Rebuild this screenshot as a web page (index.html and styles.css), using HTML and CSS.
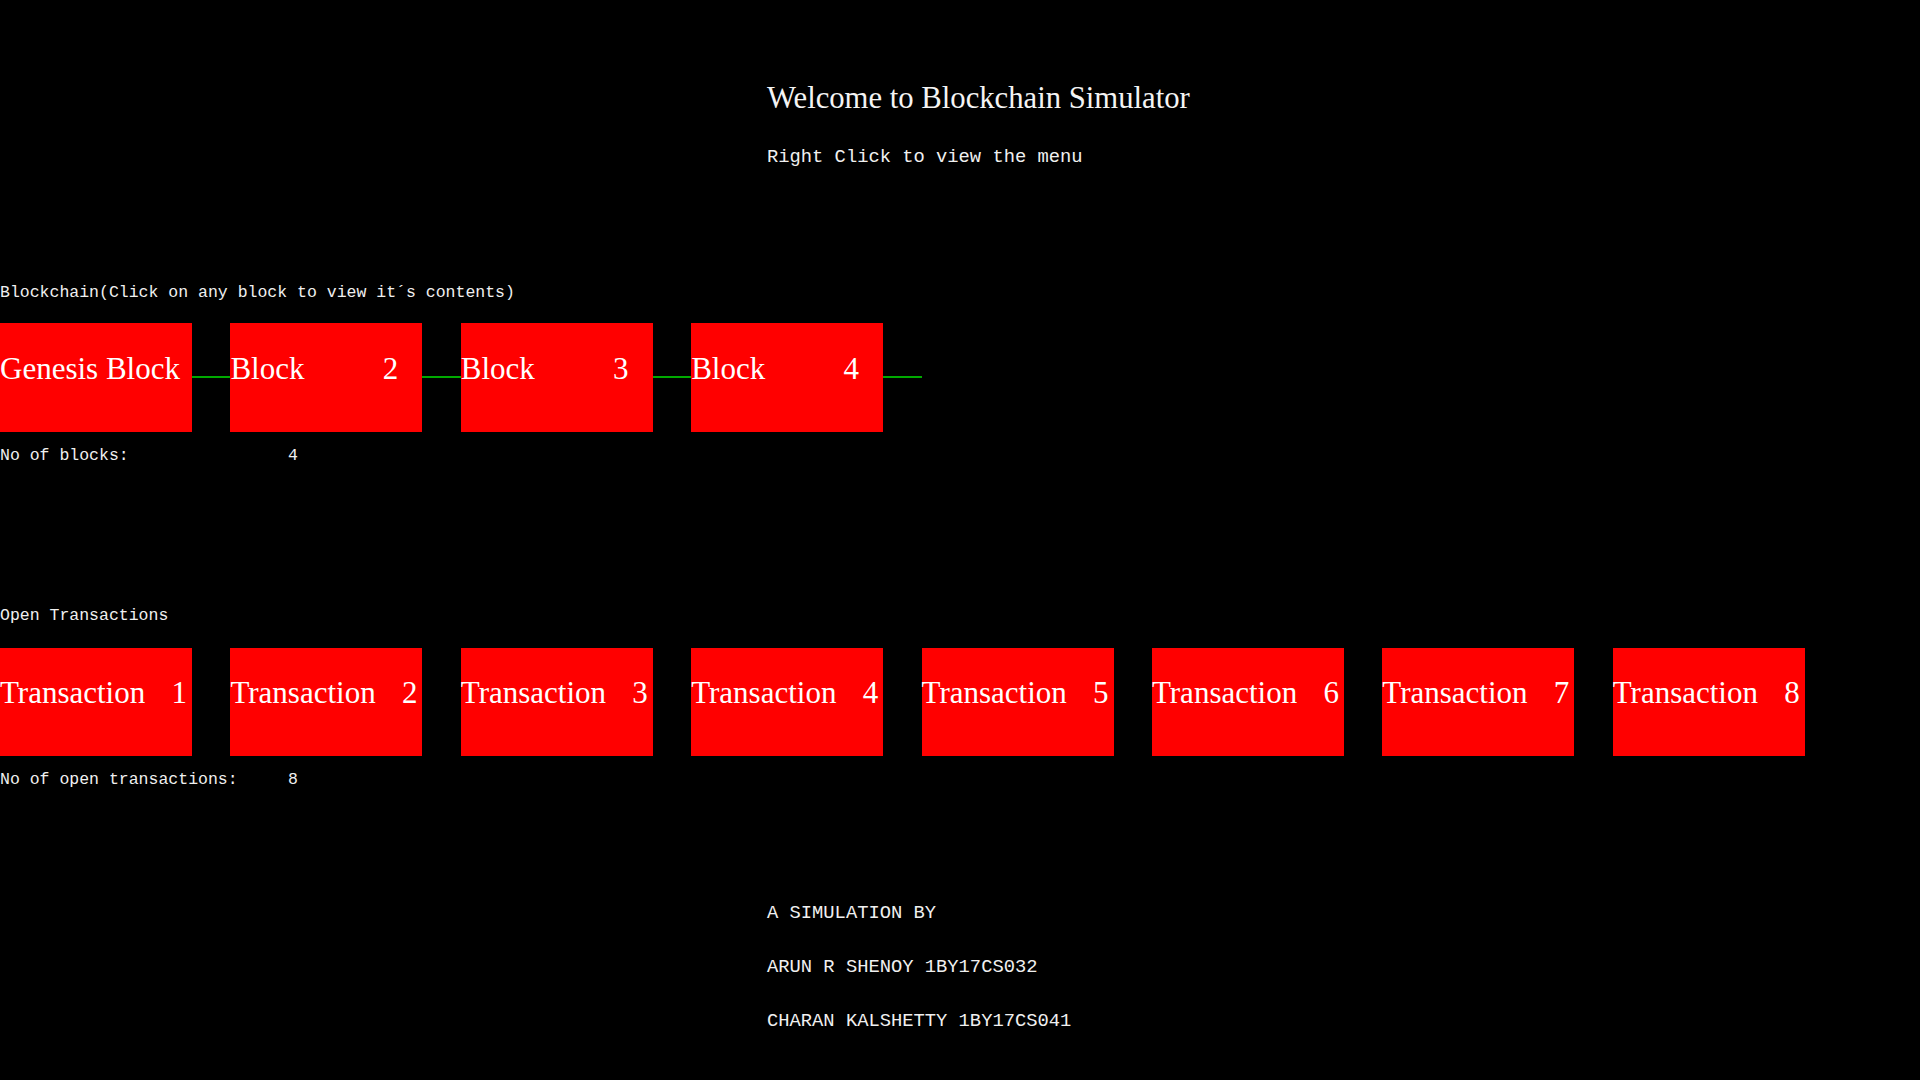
FILE: index.html
```html
<!DOCTYPE html>
<html lang="en">
<head>
<meta charset="utf-8">
<title>Blockchain Simulator</title>
<link rel="stylesheet" href="styles.css">
</head>
<body>
<main class="screen">
  <header class="intro">
    <h1 class="title">Welcome to Blockchain Simulator</h1>
    <p class="mono subtitle">Right Click to view the menu</p>
  </header>

  <section class="section chain-section">
    <p class="mono small section-label">Blockchain(Click on any block to view it´s contents)</p>
    <div class="chain">
      <div class="box"><span class="box-label">Genesis Block</span></div>
      <div class="link"></div>
      <div class="box"><span class="box-label block-name">Block</span><span class="box-num">2</span></div>
      <div class="link"></div>
      <div class="box"><span class="box-label block-name">Block</span><span class="box-num">3</span></div>
      <div class="link"></div>
      <div class="box"><span class="box-label block-name">Block</span><span class="box-num">4</span></div>
      <div class="link"></div>
    </div>
    <p class="mono small count"><span class="count-label">No of blocks:</span>4</p>
  </section>

  <section class="section tx-section">
    <p class="mono small section-label">Open Transactions</p>
    <div class="tx-row">
      <div class="box"><span class="box-label tx-name">Transaction</span><span class="box-num">1</span></div>
      <div class="box"><span class="box-label tx-name">Transaction</span><span class="box-num">2</span></div>
      <div class="box"><span class="box-label tx-name">Transaction</span><span class="box-num">3</span></div>
      <div class="box"><span class="box-label tx-name">Transaction</span><span class="box-num">4</span></div>
      <div class="box"><span class="box-label tx-name">Transaction</span><span class="box-num">5</span></div>
      <div class="box"><span class="box-label tx-name">Transaction</span><span class="box-num">6</span></div>
      <div class="box"><span class="box-label tx-name">Transaction</span><span class="box-num">7</span></div>
      <div class="box"><span class="box-label tx-name">Transaction</span><span class="box-num">8</span></div>
    </div>
    <p class="mono small count"><span class="count-label">No of open transactions:</span>8</p>
  </section>

  <footer class="credits">
    <p class="mono credit">A SIMULATION BY</p>
    <p class="mono credit">ARUN R SHENOY 1BY17CS032</p>
    <p class="mono credit">CHARAN KALSHETTY 1BY17CS041</p>
  </footer>
</main>
</body>
</html>
```

FILE: styles.css
```css
html, body {
  margin: 0;
  padding: 0;
  background: #000;
  color: #fff;
}

body {
  width: 1920px;
  height: 1080px;
  overflow: hidden;
}

.screen {
  display: flex;
  flex-direction: column;
}

p, h1 {
  margin: 0;
  font-weight: normal;
}

.mono {
  font-family: "Liberation Mono", "DejaVu Sans Mono", monospace;
  font-size: 18.8px;
  line-height: 20px;
  white-space: pre;
  color: #f0f0f0;
}

.mono.small {
  font-size: 16.5px;
}

.intro {
  padding-left: 767px;
  padding-top: 81px;
}

.title {
  font-family: "Liberation Serif", "Times New Roman", serif;
  font-size: 30.7px;
  line-height: 34px;
  color: #f4f4f4;
}

.subtitle {
  margin-top: 32px;
}

.chain-section {
  margin-top: 116px;
}

.tx-section {
  margin-top: 140px;
}

.section-label {
  margin-bottom: 20px;
}

.tx-section .section-label {
  margin-bottom: 22px;
}

.chain {
  display: flex;
  align-items: flex-start;
}

.tx-row {
  display: flex;
  align-items: flex-start;
  gap: 38.4px;
}

.box {
  flex: 0 0 192px;
  width: 192px;
  height: 109px;
  background: #ff0000;
  box-sizing: border-box;
  padding-top: 29px;
  display: flex;
  align-items: flex-start;
  font-family: "Liberation Serif", "Times New Roman", serif;
  font-size: 31px;
  line-height: 34px;
  color: #fff;
  white-space: pre;
}

.tx-row .box {
  height: 108px;
  padding-top: 28px;
}

.block-name {
  width: 152.3px;
}

.tx-name {
  width: 171.5px;
}

.link {
  flex: 0 0 38.4px;
  height: 2px;
  margin-top: 53px;
  background: #00aa00;
}

.count {
  margin-top: 14px;
}

.tx-section .count {
  margin-top: 14px;
}

.count-label {
  display: inline-block;
  width: 288px;
}

.credits {
  padding-left: 767px;
  margin-top: 113px;
  display: flex;
  flex-direction: column;
  gap: 34px;
}
```
